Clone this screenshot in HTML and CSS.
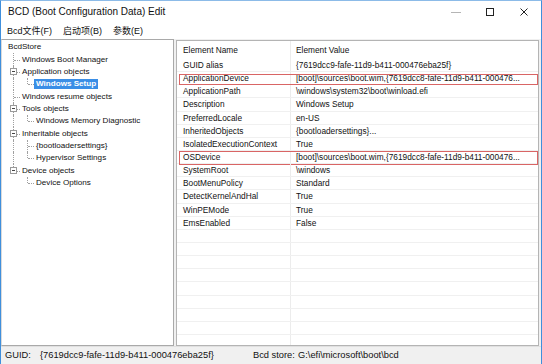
FILE: index.html
```html
<!DOCTYPE html>
<html lang="zh-CN">
<head>
    <meta charset="UTF-8">
    <title>BCD (Boot Configuration Data) Edit</title>
    <link rel="stylesheet" href="styles.css">
</head>
<body>
    <div class="window">
        <div class="titlebar">
            <span class="title">BCD (Boot Configuration Data) Edit</span>
            <div class="controls">
                <span class="ctl"><svg width="10" height="10" viewBox="0 0 10 10"><path d="M0 5.5h10" stroke="#b5b5b5" stroke-width="1"/></svg></span>
                <span class="ctl"><svg width="10" height="10" viewBox="0 0 10 10"><rect x="1.5" y="1.5" width="7" height="7" fill="none" stroke="#222" stroke-width="1"/></svg></span>
                <span class="ctl"><svg width="10" height="10" viewBox="0 0 10 10"><path d="M1.5 1.5l7 7M8.5 1.5l-7 7" stroke="#222" stroke-width="1"/></svg></span>
            </div>
        </div>

        <div class="menubar">
            <span class="menu">Bcd文件(F)</span>
            <span class="menu">启动项(B)</span>
            <span class="menu">参数(E)</span>
        </div>

        <div class="panes">
            <div class="tree">
                <div class="node"><span class="label">BcdStore</span></div>
                <div class="node"><span class="g tee"></span><span class="label">Windows Boot Manager</span></div>
                <div class="node"><span class="g tee"><span class="box"></span></span><span class="label">Application objects</span></div>
                <div class="node"><span class="g line"></span><span class="g end"></span><span class="label selected">Windows Setup</span></div>
                <div class="node"><span class="g tee"></span><span class="label">Windows resume objects</span></div>
                <div class="node"><span class="g tee"><span class="box"></span></span><span class="label">Tools objects</span></div>
                <div class="node"><span class="g line"></span><span class="g end"></span><span class="label">Windows Memory Diagnostic</span></div>
                <div class="node"><span class="g tee"><span class="box"></span></span><span class="label">Inheritable objects</span></div>
                <div class="node"><span class="g line"></span><span class="g tee"></span><span class="label">{bootloadersettings}</span></div>
                <div class="node"><span class="g line"></span><span class="g end"></span><span class="label">Hypervisor Settings</span></div>
                <div class="node"><span class="g end"><span class="box"></span></span><span class="label">Device objects</span></div>
                <div class="node"><span class="g blank"></span><span class="g end"></span><span class="label">Device Options</span></div>
            </div>

            <div class="list">
                <div class="row head"><span class="cell name">Element Name</span><span class="cell value">Element Value</span></div>
                <div class="row"><span class="cell name">GUID alias</span><span class="cell value">{7619dcc9-fafe-11d9-b411-000476eba25f}</span></div>
                <div class="row mark"><span class="cell name">ApplicationDevice</span><span class="cell value">[boot]\sources\boot.wim,{7619dcc8-fafe-11d9-b411-000476...</span></div>
                <div class="row"><span class="cell name">ApplicationPath</span><span class="cell value">\windows\system32\boot\winload.efi</span></div>
                <div class="row"><span class="cell name">Description</span><span class="cell value">Windows Setup</span></div>
                <div class="row"><span class="cell name">PreferredLocale</span><span class="cell value">en-US</span></div>
                <div class="row"><span class="cell name">InheritedObjects</span><span class="cell value">{bootloadersettings}...</span></div>
                <div class="row"><span class="cell name">IsolatedExecutionContext</span><span class="cell value">True</span></div>
                <div class="row mark tall"><span class="cell name">OSDevice</span><span class="cell value">[boot]\sources\boot.wim,{7619dcc8-fafe-11d9-b411-000476...</span></div>
                <div class="row"><span class="cell name">SystemRoot</span><span class="cell value">\windows</span></div>
                <div class="row"><span class="cell name">BootMenuPolicy</span><span class="cell value">Standard</span></div>
                <div class="row"><span class="cell name">DetectKernelAndHal</span><span class="cell value">True</span></div>
                <div class="row"><span class="cell name">WinPEMode</span><span class="cell value">True</span></div>
                <div class="row"><span class="cell name">EmsEnabled</span><span class="cell value">False</span></div>
                <div class="row"><span class="cell name"></span><span class="cell value"></span></div>
                <div class="row"><span class="cell name"></span><span class="cell value"></span></div>
                <div class="row"><span class="cell name"></span><span class="cell value"></span></div>
                <div class="row"><span class="cell name"></span><span class="cell value"></span></div>
                <div class="row"><span class="cell name"></span><span class="cell value"></span></div>
                <div class="row"><span class="cell name"></span><span class="cell value"></span></div>
                <div class="row"><span class="cell name"></span><span class="cell value"></span></div>
                <div class="row"><span class="cell name"></span><span class="cell value"></span></div>
                <div class="row"><span class="cell name"></span><span class="cell value"></span></div>
            </div>
        </div>

        <div class="status">
            <span class="part guid">GUID:</span>
            <span class="part guid-val">{7619dcc9-fafe-11d9-b411-000476eba25f}</span>
            <span class="part store">Bcd store:</span>
            <span class="part">G:\efi\microsoft\boot\bcd</span>
        </div>
    </div>
</body>
</html>
```

FILE: styles.css
```css
html, body {
    margin: 0;
    padding: 0;
    background: #fff;
}

body {
    font-family: 'Liberation Sans', Arial, sans-serif;
    color: #111;
}

.window {
    width: 542px;
    height: 364px;
    box-sizing: border-box;
    border-left: 1px solid #3f8fdc;
    border-right: 1px solid #3f8fdc;
    border-top: 1px solid #8cbbe8;
    display: flex;
    flex-direction: column;
    overflow: hidden;
    background: #fff;
}

/* title bar */
.titlebar {
    height: 21px;
    display: flex;
    align-items: center;
    flex: none;
}

.title {
    font-size: 10px;
    padding-left: 7px;
    color: #111;
    flex: 1;
}

.controls {
    display: flex;
    align-items: center;
}

.ctl {
    width: 34px;
    display: flex;
    justify-content: center;
    align-items: center;
    height: 14px;
}

/* menu */
.menubar {
    height: 17px;
    display: flex;
    align-items: center;
    font-family: 'Liberation Sans', 'Noto Sans CJK SC', sans-serif;
    font-size: 9px;
    padding-left: 6px;
    gap: 11px;
    flex: none;
    color: #111;
}

/* panes */
.panes {
    flex: none;
    height: 307px;
    display: flex;
    background: #f0f0f0;
    gap: 2px;
}

.tree {
    width: 173px;
    box-sizing: border-box;
    border: 1px solid #a9a9a9;
    border-left: 1px solid #dadada;
    background: #fff;
    padding: 1px 0 0 4px;
    font-size: 8.1px;
}

.node {
    height: 12.35px;
    display: flex;
    align-items: center;
    white-space: nowrap;
}

.label {
    padding: 0 2px;
    line-height: 10px;
}

.label.selected {
    background: #3a8ee6;
    color: #fff;
    font-weight: bold;
}

.g {
    position: relative;
    width: 14px;
    height: 100%;
    flex: none;
    display: flex;
    align-items: center;
    justify-content: center;
}

.g::before {
    content: "";
    position: absolute;
    left: 7px;
    top: 0;
    bottom: 0;
    border-left: 1px dotted #a0a0a0;
}

.g::after {
    content: "";
    position: absolute;
    left: 8px;
    right: 0;
    top: 50%;
    border-top: 1px dotted #a0a0a0;
}

.g.end::before {
    bottom: 50%;
}

.g.line::after,
.g.blank::after,
.g.blank::before {
    display: none;
}

.box {
    position: relative;
    z-index: 1;
    width: 5px;
    height: 5px;
    margin-left: 1px;
    border: 1px solid #9a9a9a;
    background: linear-gradient(#444, #444) center / 3px 1px no-repeat, #fff;
}

/* list */
.list {
    flex: 1;
    margin-top: 1px;
    margin-right: 2px;
    box-sizing: border-box;
    border: 1px solid #b4b4b4;
    background: #fff;
    overflow: hidden;
    font-size: 8.3px;
}

.row {
    position: relative;
    height: 13.15px;
    box-sizing: border-box;
    display: flex;
    border-bottom: 1px solid #f0f0f0;
    white-space: nowrap;
}

.row.head {
    height: 18px;
    border-bottom: none;
}

.cell {
    display: flex;
    align-items: center;
    overflow: hidden;
}

.cell.name {
    width: 114px;
    padding-left: 6px;
    box-sizing: border-box;
    border-right: 1px solid #ececec;
    flex: none;
}

.cell.value {
    padding-left: 5px;
    flex: 1;
}

.row.mark::after {
    content: "";
    position: absolute;
    left: 2px;
    right: 0;
    top: 2px;
    bottom: -1px;
    border: 1px solid #d96565;
}

.row.mark.tall::after {
    top: 0;
    bottom: -2px;
}

/* status bar */
.status {
    flex: 1;
    background: #f0f0f0;
    border-top: 1px solid #e0e0e0;
    display: flex;
    align-items: center;
    font-size: 9.3px;
    padding: 0 0 1px 4px;
    color: #111;
}

.part.guid {
    width: 35px;
}

.part.guid-val {
    width: 213px;
}

.part.store {
    width: 45px;
}
```
